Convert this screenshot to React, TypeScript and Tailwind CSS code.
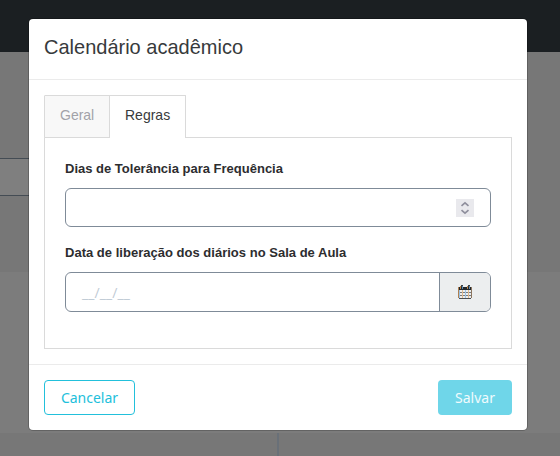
import React from 'react';

function Backdrop() {
  return (
    <div className="flex h-full flex-col bg-[#777777]">
      <div className="h-[52px] shrink-0 bg-[#1b1f22]" />
      <div className="h-[220px] shrink-0 pt-[106px]">
        <div className="h-[38px] w-[200px] border-y border-[#444c54] bg-[#7f7f7f]" />
      </div>
      <div className="h-[161px] shrink-0 bg-[#7c7c7c]" />
      <div className="flex grow">
        <div className="w-[277px] shrink-0" />
        <div className="w-[2px] bg-[#697078]" />
      </div>
    </div>
  );
}

function Tabs() {
  return (
    <div className="-mb-px flex h-[43px] text-[14px] leading-[38px]">
      <div className="relative z-10 w-[66px] rounded-t-[1px] border border-[#dadada] bg-[#f8f8f8] pl-[15px] text-[#a2a2a8]">
        <span className="inline-block scale-y-[1.08]">Geral</span>
      </div>
      <div className="relative z-10 -ml-px w-[77px] rounded-t-[1px] border border-b-0 border-[#dadada] bg-white pl-[15px] text-[#373a3c]">
        <span className="inline-block scale-y-[1.08]">Regras</span>
      </div>
    </div>
  );
}

function Stepper() {
  return (
    <div className="flex h-[18px] w-[18px] items-center justify-center bg-[#e9e9ed]">
      <svg width="18" height="18" viewBox="0 0 18 18" fill="none" stroke="#8f8f9d" strokeWidth="1.7">
        <path d="M5.5 6.8 9 3.8l3.5 3" />
        <path d="m5.5 11.2 3.5 3 3.5-3" />
      </svg>
    </div>
  );
}

function CalendarIcon() {
  return (
    <svg width="14" height="14" viewBox="0 0 14 14" shapeRendering="crispEdges">
      <path d="M1 2h12v3H1z" fill="#22272b" />
      <path d="M0 2h1v11H0z" fill="#b08050" />
      <path d="M13 2h1v11h-1z" fill="#8d765f" />
      <path d="M1 13h12v1H1z" fill="#4a4e52" />
      <path d="M1 7h12v1H1zM1 10h12v1H1z" fill="#777b80" />
      <path d="M4 5h1v8H4zM10 5h1v8h-1z" fill="#e0b98c" />
      <path d="M1 5h1v8H1zM7 5h1v8H7z" fill="#9cc3e6" />
      <path d="M3 0h2v2H3zM10 0h2v2h-2z" fill="#3c4044" />
      <path d="M2 1h1v3H2zM9 1h1v3H9z" fill="#b98248" />
      <path d="M4 1h1v3H4zM11 1h1v3h-1z" fill="#5d8db5" />
    </svg>
  );
}

export default function App() {
  return (
    <div className="relative h-screen w-screen overflow-hidden font-['Liberation_Sans',sans-serif]">
      <Backdrop />
      <div
        role="dialog"
        className="absolute top-[19px] left-[29px] flex h-[411px] w-[498px] flex-col rounded-[4px] bg-white shadow-[0_0_0_1px_rgba(0,0,0,0.2)]"
      >
        <header className="h-[61px] shrink-0 border-b border-[#ebebeb] px-[15px] pt-[13px]">
          <h1 className="text-[20px] leading-[30px] text-[#373a3c]">
            <span className="inline-block scale-y-[1.04]">Calendário acadêmico</span>
          </h1>
        </header>
        <main className="h-[284px] shrink-0 px-[15px] pt-[15px]">
          <Tabs />
          <section className="h-[212px] border border-[#dadada] px-5 pt-[21px]">
            <label className="block h-[29px] text-[13px] leading-[20px] font-bold text-[#2d2d2f]">
              <span>Dias de Tolerância para Frequência</span>
            </label>
            <div className="flex h-[39px] items-center justify-end rounded-[6px] border border-[#7f8b98] pr-4">
              <Stepper />
            </div>
            <label className="mt-4 block h-[29px] text-[13px] leading-[19px] font-bold text-[#2d2d2f]">
              <span className="tracking-[0.015px]">Data de liberação dos diários no Sala de Aula</span>
            </label>
            <div className="flex h-[40px] overflow-hidden rounded-[6px] border border-[#7f8b98]">
              <div className="flex grow items-center pl-4 text-[14px] text-[#bfcbd5]">
                <span className="font-['Open_Sans',sans-serif] tracking-[0.1px]">__/__/__</span>
              </div>
              <div className="flex w-[51px] items-center justify-center border-l border-[#7f8b98] bg-[#eceeef]">
                <CalendarIcon />
              </div>
            </div>
          </section>
        </main>
        <footer className="flex grow items-start justify-between border-t border-[#ebebeb] px-[15px] pt-[15px] font-['Noto_Sans',sans-serif] text-[14px]">
          <button className="h-[35px] w-[91px] rounded-[4px] border border-[#22c0db] text-[#22c0db]">
            Cancelar
          </button>
          <button className="h-[35px] w-[74px] rounded-[4px] bg-[#6fd6e9] text-[#f1fbfd]">Salvar</button>
        </footer>
      </div>
    </div>
  );
}
